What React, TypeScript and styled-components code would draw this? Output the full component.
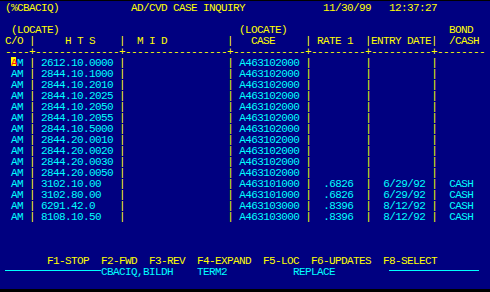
import React from "react";
import styled, { createGlobalStyle } from "styled-components";

const Global = createGlobalStyle`
  html, body { margin: 0; padding: 0; background: #000000; }
  body { width: 490px; height: 292px; overflow: hidden; }
`;

const Screen = styled.div`
  margin-top: 1px;
  width: 490px;
  height: 288px;
  box-sizing: border-box;
  padding: 2px 0 0 5px;
  background: #000080;
  color: #00ffff;
  font-family: "Liberation Mono", "DejaVu Sans Mono", monospace;
  font-size: 11px;
  letter-spacing: -0.6px;
  line-height: 11px;
  display: flex;
  flex-direction: column;
`;

const Line = styled.div`
  white-space: pre;
  height: 11px;
  flex: 0 0 11px;
`;

const Y = styled.span`
  color: #ffff00;
`;

const C = styled.span`
  color: #00ffff;
`;

const Cursor = styled.span`
  color: #ff1010;
  background: linear-gradient(#ffff00, #ffff00) no-repeat;
  background-size: 5px 9px;
  background-position: 0 0;
`;

const Rule = styled.span<{ $cols: number }>`
  display: inline-block;
  width: ${(p) => p.$cols * 6}px;
  height: 1px;
  background: #00ffff;
  vertical-align: baseline;
  margin-bottom: 4px;
`;

type Row = {
  hts: string;
  kase: string;
  rate?: string;
  date?: string;
  cash?: string;
};

const rows: Row[] = [
  { hts: "2612.10.0000", kase: "A463102000" },
  { hts: "2844.10.1000", kase: "A463102000" },
  { hts: "2844.10.2010", kase: "A463102000" },
  { hts: "2844.10.2025", kase: "A463102000" },
  { hts: "2844.10.2050", kase: "A463102000" },
  { hts: "2844.10.2055", kase: "A463102000" },
  { hts: "2844.10.5000", kase: "A463102000" },
  { hts: "2844.20.0010", kase: "A463102000" },
  { hts: "2844.20.0020", kase: "A463102000" },
  { hts: "2844.20.0030", kase: "A463102000" },
  { hts: "2844.20.0050", kase: "A463102000" },
  { hts: "3102.10.00", kase: "A463101000", rate: ".6826", date: "6/29/92", cash: "CASH" },
  { hts: "3102.80.00", kase: "A463101000", rate: ".6826", date: "6/29/92", cash: "CASH" },
  { hts: "6291.42.0", kase: "A463103000", rate: ".8396", date: "8/12/92", cash: "CASH" },
  { hts: "8108.10.50", kase: "A463103000", rate: ".8396", date: "8/12/92", cash: "CASH" },
];

const sp = (n: number) => " ".repeat(n);

function DataLine({ row, cursor }: { row: Row; cursor: boolean }) {
  return (
    <Line>
      {" "}
      {cursor ? <Cursor>A</Cursor> : <C>A</C>}
      <C>M</C>
      {" "}
      <Y>|</Y>
      {" "}
      <C>{row.hts.padEnd(13)}</C>
      <Y>|</Y>
      {sp(17)}
      <Y>|</Y>
      {" "}
      <C>{row.kase}</C>
      {" "}
      <Y>|</Y>
      <C>{row.rate ? `  ${row.rate}  ` : sp(9)}</C>
      <Y>|</Y>
      <C>{row.date ? `  ${row.date} ` : sp(10)}</C>
      <Y>|</Y>
      <C>{row.cash ? `  ${row.cash}` : ""}</C>
    </Line>
  );
}

export default function App() {
  return (
    <>
      <Global />
      <Screen>
        <Line>
          <Y>{"(%CBACIQ)" + sp(12) + "AD/CVD CASE INQUIRY" + sp(13) + "11/30/99" + sp(3) + "12:37:27"}</Y>
        </Line>
        <Line>{" "}</Line>
        <Line>
          <Y>{" (LOCATE)" + sp(30) + "(LOCATE)" + sp(27) + "BOND"}</Y>
        </Line>
        <Line>
          <Y>
            {"C/O |     H T S    |  M I D          |   CASE     | RATE 1  |ENTRY DATE|  /CASH"}
          </Y>
        </Line>
        <Line>
          <Y>
            {"----+--------------+-----------------+------------+---------+----------+--------"}
          </Y>
        </Line>
        {rows.map((r, i) => (
          <DataLine key={i} row={r} cursor={i === 0} />
        ))}
        <Line>{" "}</Line>
        <Line>{" "}</Line>
        <Line>{" "}</Line>
        <Line>
          <Y>{sp(7) + "F1-STOP  F2-FWD  F3-REV  F4-EXPAND  F5-LOC  F6-UPDATES  F8-SELECT"}</Y>
        </Line>
        <Line>
          <Rule $cols={16} />
          <C>CBACIQ,BILDH</C>
          {sp(4)}
          <C>TERM2</C>
          {sp(11)}
          <C>REPLACE</C>
          {sp(9)}
          <Rule $cols={15} />
        </Line>
      </Screen>
    </>
  );
}
